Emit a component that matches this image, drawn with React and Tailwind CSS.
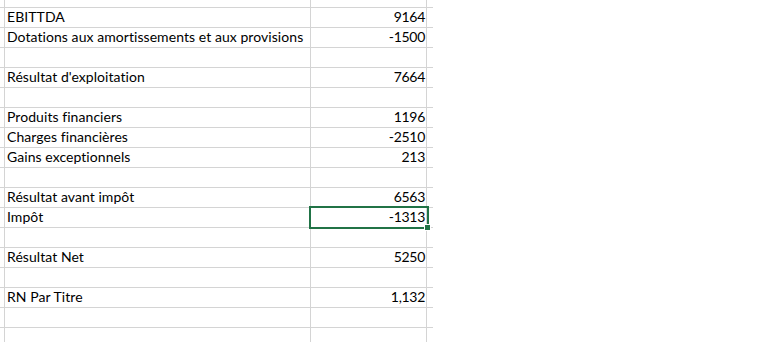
import React from "react";

const rows = [
  ["", ""],
  ["EBITTDA", "9164"],
  ["Dotations aux amortissements et aux provisions", "-1500"],
  ["", ""],
  ["Résultat d'exploitation", "7664"],
  ["", ""],
  ["Produits financiers", "1196"],
  ["Charges financières", "-2510"],
  ["Gains exceptionnels", "213"],
  ["", ""],
  ["Résultat avant impôt", "6563"],
  ["Impôt", "-1313"],
  ["", ""],
  ["Résultat Net", "5250"],
  ["", ""],
  ["RN Par Titre", "1,132"],
  ["", ""],
  ["", ""],
  ["", ""],
];

const SELECTED = 11;

const App = () => {
  return (
    <div
      className="w-[775px] h-[342px] bg-white overflow-hidden text-black"
      style={{ fontFamily: "Lato, 'Liberation Sans', sans-serif" }}
    >
      <div className="-mt-[12px] w-[433px]">
        {rows.map((row, i) => (
          <div
            key={i}
            className="flex h-[20px] border-b border-[#d4d4d4] text-[14px] leading-none [font-variant-ligatures:none]"
          >
            <div className="w-[5px] shrink-0 border-r border-[#d4d4d4]"></div>
            <div className="w-[306px] shrink-0 border-r border-[#d4d4d4] flex items-end pl-[2px] pb-[3px] whitespace-nowrap tracking-[0.06px]">
              {row[0]}
            </div>
            <div className="relative w-[116px] shrink-0 border-r border-[#d4d4d4] flex items-end justify-end pr-[1px] pb-[3px] tracking-[-0.3px]">
              {row[1]}
              {i === SELECTED && (
                <div className="absolute z-10 -left-[2px] -top-[2px] w-[120px] h-[23px] border-2 border-[#217346]">
                  <div className="absolute -right-[4px] -bottom-[4px] w-[7px] h-[7px] bg-[#217346] border border-white"></div>
                </div>
              )}
            </div>
            <div className="w-[6px] shrink-0"></div>
          </div>
        ))}
      </div>
    </div>
  );
};

export default App;
